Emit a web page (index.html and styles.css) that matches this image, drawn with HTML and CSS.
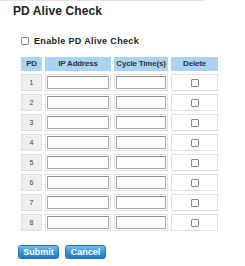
FILE: index.html
```html
<!DOCTYPE html>
<html lang="en">
<head>
  <meta charset="UTF-8" />
  <title>PD Alive Check</title>
  <link rel="stylesheet" href="styles.css">
</head>
<body>
  <div class="topbar"></div>
  <div class="panel">
    <h2>PD Alive Check</h2>

    <label class="enable">
      <span class="box"></span>
      Enable PD Alive Check
    </label>

    <table class="pd-table">
      <thead>
        <tr>
          <th class="col-pd">PD</th>
          <th class="col-ip">IP Address</th>
          <th class="col-cycle">Cycle Time(s)</th>
          <th class="col-del">Delete</th>
        </tr>
      </thead>
      <tbody id="rows">
        <tr><td class="num">1</td><td><input type="text"></td><td><input type="text"></td><td class="del"><span class="box"></span></td></tr>
        <tr><td class="num">2</td><td><input type="text"></td><td><input type="text"></td><td class="del"><span class="box"></span></td></tr>
        <tr><td class="num">3</td><td><input type="text"></td><td><input type="text"></td><td class="del"><span class="box"></span></td></tr>
        <tr><td class="num">4</td><td><input type="text"></td><td><input type="text"></td><td class="del"><span class="box"></span></td></tr>
        <tr><td class="num">5</td><td><input type="text"></td><td><input type="text"></td><td class="del"><span class="box"></span></td></tr>
        <tr><td class="num">6</td><td><input type="text"></td><td><input type="text"></td><td class="del"><span class="box"></span></td></tr>
        <tr><td class="num">7</td><td><input type="text"></td><td><input type="text"></td><td class="del"><span class="box"></span></td></tr>
        <tr><td class="num">8</td><td><input type="text"></td><td><input type="text"></td><td class="del"><span class="box"></span></td></tr>
      </tbody>
    </table>

    <div class="actions">
      <button class="btn">Submit</button>
      <button class="btn">Cancel</button>
    </div>
  </div>
</body>
</html>
```

FILE: styles.css
```css
* {
  margin: 0;
  padding: 0;
  box-sizing: border-box;
  font-family: 'Liberation Sans', Arial, sans-serif;
}

body {
  background: #ffffff;
  color: #222222;
}

.topbar {
  width: 205px;
  height: 1px;
  background: #e4e4e4;
}

.panel {
  padding: 3px 0 0 13px;
}

h2 {
  font-size: 12px;
  font-weight: bold;
  letter-spacing: 0.1px;
  color: #222222;
  line-height: 14px;
}

.box {
  display: inline-block;
  width: 8px;
  height: 8px;
  border: 1px solid #8a8a8a;
  border-radius: 1px;
  background: #fff;
}

.enable {
  display: flex;
  align-items: center;
  gap: 5px;
  margin: 18px 0 0 8px;
  font-size: 9px;
  font-weight: bold;
  letter-spacing: 0.35px;
  color: #222;
  height: 10px;
}

.pd-table {
  border-collapse: separate;
  border-spacing: 3px;
  margin: 8px 0 0 5px;
  font-size: 8px;
  line-height: 1;
}

.pd-table th {
  background: #a9d4f5;
  font-size: 8px;
  font-weight: bold;
  color: #333;
  height: 14px;
  padding: 0;
  letter-spacing: -0.2px;
}

.col-pd { width: 21px; }
.col-ip { width: 66px; }
.col-cycle { width: 54px; }
.col-del { width: 47px; }

.pd-table td {
  border: 1px solid #e0e0e0;
  height: 17px;
  padding: 0 1px;
  text-align: center;
  vertical-align: middle;
}

.pd-table td.num {
  background: #eeeeee;
  font-size: 7px;
  color: #444;
}

.pd-table input {
  display: block;
  width: 100%;
  height: 13px;
  border: 1px solid #a8a8a8;
  border-top-color: #8f8f8f;
  background: #fff;
}

.del .box {
  display: block;
  margin: 0 auto;
}

.actions {
  display: flex;
  gap: 6px;
  margin: 11px 0 0 5px;
}

.btn {
  width: 41px;
  height: 14px;
  border: 1px solid #2a73b0;
  border-radius: 3px;
  background: linear-gradient(to bottom, #74bcee, #3a93d6 50%, #2279c2);
  color: #fff;
  font-size: 9px;
  font-weight: bold;
  font-family: 'Liberation Sans', Arial, sans-serif;
  box-shadow: 0 1px 1px rgba(0, 0, 0, 0.25);
}
```
